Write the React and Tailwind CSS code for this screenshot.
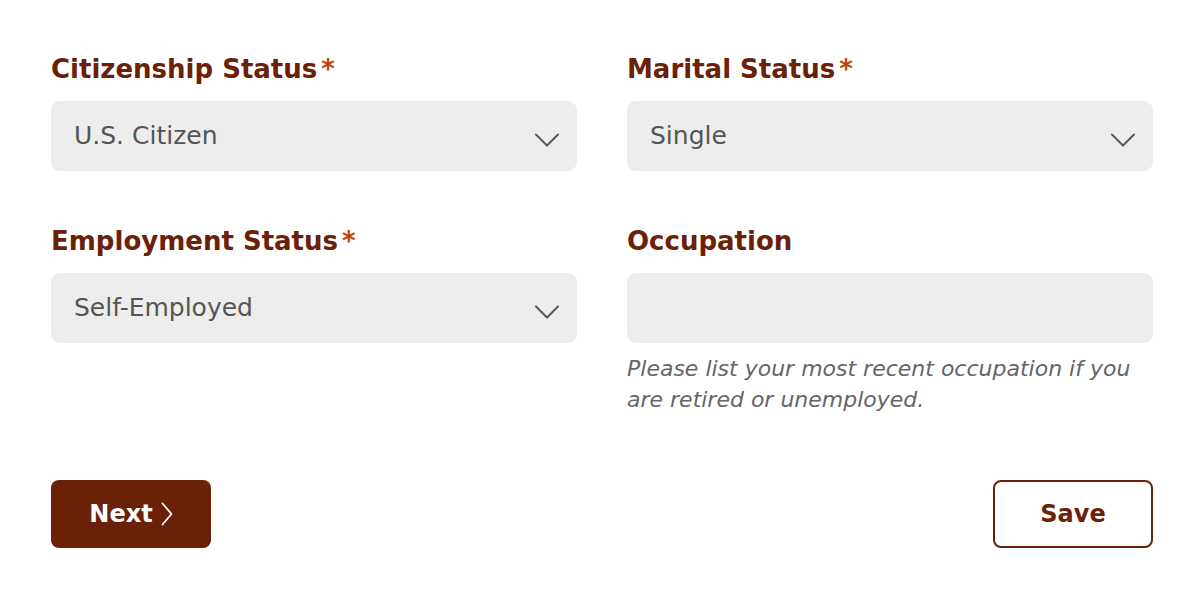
import React from "react";

const Chevron = () => (
  <svg width="24" height="14" viewBox="0 0 24 14" fill="none" className="shrink-0">
    <path d="M1 1.5 L12 12.5 L23 1.5" stroke="#555555" strokeWidth="2" strokeLinecap="round" strokeLinejoin="round" />
  </svg>
);

const Label = ({ children, required }) => (
  <div className="flex items-baseline text-[26px] leading-[32px] font-bold text-[#6a2108] h-[32px]">
    <span>{children}</span>
    {required && <span className="ml-[4px] text-[#c2410c]">*</span>}
  </div>
);

const Select = ({ value }) => (
  <div className="mt-[16px] h-[70px] rounded-[9px] bg-[#ededed] flex items-center justify-between pl-[23px] pr-[18px]">
    <span className="text-[25px] text-[#555555]">{value}</span>
    <div className="pt-[8px]">
      <Chevron />
    </div>
  </div>
);

export default function App() {
  return (
    <div className="w-[1200px] h-[600px] bg-white pt-[53px] pl-[51px] pr-[47px]" style={{ fontFamily: '"DejaVu Sans", sans-serif' }}>
      <div className="grid grid-cols-2 gap-x-[50px]">
        <div>
          <Label required>Citizenship Status</Label>
          <Select value="U.S. Citizen" />
        </div>
        <div>
          <Label required>Marital Status</Label>
          <Select value="Single" />
        </div>
        <div className="mt-[54px]">
          <Label required>Employment Status</Label>
          <Select value="Self-Employed" />
        </div>
        <div className="mt-[54px]">
          <Label>Occupation</Label>
          <div className="mt-[16px] h-[70px] rounded-[9px] bg-[#ededed]" />
          <p className="mt-[10px] text-[22px] leading-[31px] italic text-[#666666] pr-[10px]">
            Please list your most recent occupation if you are retired or unemployed.
          </p>
        </div>
      </div>
      <div className="mt-[65px] flex justify-between">
        <button className="w-[160px] h-[68px] rounded-[8px] bg-[#6a2108] text-white text-[24px] font-bold flex items-center justify-center gap-[8px]">
          <span>Next</span>
          <svg width="12" height="24" viewBox="0 0 12 24" fill="none">
            <path d="M1.5 1.5 L10.5 12 L1.5 22.5" stroke="white" strokeWidth="1.8" strokeLinecap="round" strokeLinejoin="round" />
          </svg>
        </button>
        <button className="w-[160px] h-[68px] rounded-[8px] border-2 border-[#6a2108] bg-white text-[#6a2108] text-[24px] font-bold">
          Save
        </button>
      </div>
    </div>
  );
}
